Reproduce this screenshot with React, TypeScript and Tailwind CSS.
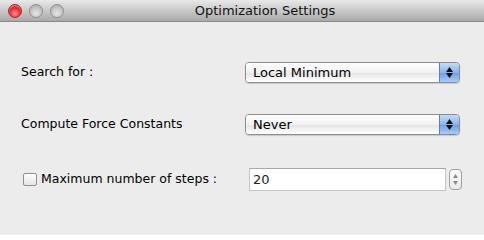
import React from "react";

const font = { fontFamily: '"DejaVu Sans", "Lucida Grande", sans-serif' };

function Light({ red }: { red?: boolean }) {
  return (
    <div
      className={
        red
          ? "h-[14px] w-[14px] rounded-full border border-[#9b2b2b] bg-[radial-gradient(circle_at_50%_70%,#ff9a9a_0%,#f0272d_50%,#b8141a_100%)] shadow-[inset_0_1px_1px_rgba(255,255,255,0.6)]"
          : "h-[14px] w-[14px] rounded-full border border-[#8e8e8e] bg-[radial-gradient(circle_at_50%_70%,#e6e6e6_0%,#c4c4c4_55%,#a4a4a4_100%)]"
      }
    />
  );
}

function Popup({ value }: { value: string }) {
  return (
    <div className="flex h-[21px] w-[215px] overflow-hidden rounded-[4px] border border-[#8c8c8c] shadow-[0_1px_1px_rgba(0,0,0,0.15)]">
      <div className="flex flex-1 items-center bg-[linear-gradient(#ffffff,#f1f1f1_50%,#e6e6e6_55%,#ffffff)] pl-[7px] text-[13px] text-black">
        {value}
      </div>
      <div className="flex w-[20px] flex-col items-center justify-center gap-[1px] border-l border-[#5e7fb5] bg-[linear-gradient(#c3dbf8,#8ab4ea_50%,#6ea1e3_55%,#a9ccf6)]">
        <svg width="7" height="5" viewBox="0 0 7 5">
          <path d="M3.5 0L7 5H0z" fill="#111" />
        </svg>
        <svg width="7" height="5" viewBox="0 0 7 5">
          <path d="M0 0h7L3.5 5z" fill="#111" />
        </svg>
      </div>
    </div>
  );
}

export default function App() {
  return (
    <div className="h-[235px] w-[484px] overflow-hidden bg-[#ececec]" style={font}>
      <div className="relative flex h-[22px] items-center border-b border-[#8a8a8a] bg-[linear-gradient(#e9e9e9,#a9a9a9)]">
        <div className="flex gap-[7px] pl-[8px]">
          <Light red />
          <Light />
          <Light />
        </div>
        <div className="absolute inset-0 flex items-center justify-center pl-[46px] text-[13px] text-[#111]">
          Optimization Settings
        </div>
      </div>

      <div className="flex flex-col pt-[40px]">
        <div className="flex h-[21px] items-center">
          <div className="w-[245px] pl-[21px] text-[12.5px] text-black">Search for :</div>
          <Popup value="Local Minimum" />
        </div>

        <div className="mt-[31px] flex h-[21px] items-center">
          <div className="w-[245px] pl-[21px] text-[12.5px] text-black">Compute Force Constants</div>
          <Popup value="Never" />
        </div>

        <div className="mt-[33px] flex h-[23px] items-center">
          <div className="flex w-[249px] items-center pl-[23px] text-[12.5px] text-black">
            <div className="mr-[4px] h-[13px] w-[14px] rounded-[2px] border border-[#8f8f8f] bg-[linear-gradient(#ffffff,#e4e4e4)]" />
            Maximum number of steps :
          </div>
          <div className="flex h-[23px] w-[197px] items-center border border-[#c6c6c6] border-t-[#a8a8a8] bg-white pl-[3px] text-[13px] text-[#222]">
            20
          </div>
          <div className="ml-[3px] flex h-[21px] w-[13px] flex-col items-center justify-center gap-[3px] rounded-[4px] border border-[#a0a0a0] bg-[linear-gradient(#fbfbfb,#e8e8e8)]">
            <svg width="5" height="4" viewBox="0 0 5 4">
              <path d="M2.5 0L5 4H0z" fill="#8a8a8a" />
            </svg>
            <svg width="5" height="4" viewBox="0 0 5 4">
              <path d="M0 0h5L2.5 4z" fill="#8a8a8a" />
            </svg>
          </div>
        </div>
      </div>
    </div>
  );
}
